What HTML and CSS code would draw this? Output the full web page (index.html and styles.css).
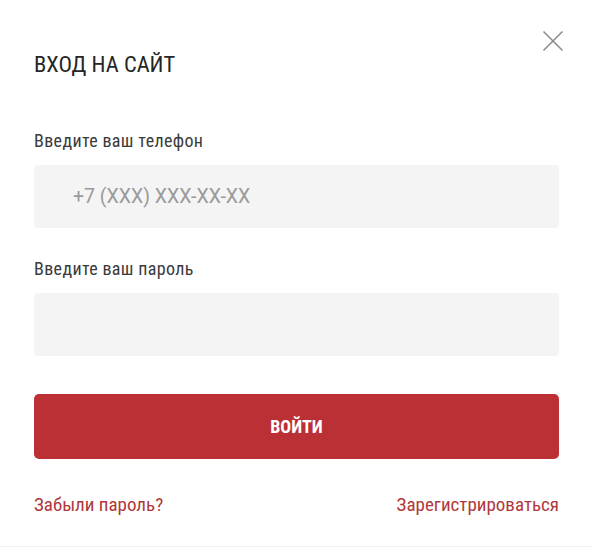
FILE: index.html
```html
<!DOCTYPE html>
<html lang="ru">
<head>
    <meta charset="UTF-8">
    <title>Вход на сайт</title>
    <link rel="stylesheet" href="styles.css">
</head>
<body>
    <div class="modal">
        <button class="close" type="button" aria-label="Закрыть">
            <svg width="22" height="22" viewBox="0 0 22 22">
                <path d="M1.5 1.5L20.5 20.5M20.5 1.5L1.5 20.5" stroke="#8c8c8c" stroke-width="1.6" fill="none"/>
            </svg>
        </button>
        <h2 class="title">ВХОД НА САЙТ</h2>
        <form class="login-form">
            <label class="field-label" for="phone">Введите ваш телефон</label>
            <input class="field" type="text" id="phone" placeholder="+7 (XXX) XXX-XX-XX">

            <label class="field-label" for="pass">Введите ваш пароль</label>
            <input class="field" type="password" id="pass">

            <button class="submit" type="submit">ВОЙТИ</button>
        </form>
        <div class="links">
            <a href="#">Забыли пароль?</a>
            <a href="#">Зарегистрироваться</a>
        </div>
    </div>
</body>
</html>
```

FILE: styles.css
```css
body {
    margin: 0;
    background: #fff;
    font-family: "Roboto Condensed", "Roboto", sans-serif;
    font-stretch: 75%;
    color: #333;
}

.modal {
    position: relative;
    width: 593px;
    height: 547px;
    box-sizing: border-box;
    padding: 49px 34px 0 34px;
    border-bottom: 1px solid #f0f0f0;
}

.close {
    position: absolute;
    top: 30px;
    right: 29px;
    padding: 0;
    border: none;
    background: none;
    cursor: pointer;
}

.close svg {
    display: block;
}

.title {
    margin: 0 0 51px 0;
    font-size: 22.5px;
    font-weight: 400;
    line-height: 30px;
    color: #262626;
}

.login-form {
    display: flex;
    flex-direction: column;
}

.field-label {
    font-size: 18px;
    letter-spacing: 0.35px;
    line-height: 22px;
    margin-bottom: 13px;
    color: #3a3a3a;
}

.field {
    height: 63px;
    box-sizing: border-box;
    border: none;
    border-radius: 4px;
    background: #f4f4f4;
    padding: 0 39px;
    font-family: "Roboto", "Liberation Sans", sans-serif;
    font-stretch: normal;
    font-size: 19.5px;
    margin-bottom: 30px;
}

.field::placeholder {
    color: #9a9a9a;
}

.submit {
    margin-top: 8px;
    height: 65px;
    border: none;
    border-radius: 5px;
    background: #bb3034;
    color: #fff;
    font-family: inherit;
    font-stretch: inherit;
    font-size: 18px;
    font-weight: bold;
    cursor: pointer;
}

.links {
    display: flex;
    justify-content: space-between;
    margin-top: 34px;
}

.links a {
    color: #b0383c;
    font-size: 19px;
    text-decoration: none;
}
```
